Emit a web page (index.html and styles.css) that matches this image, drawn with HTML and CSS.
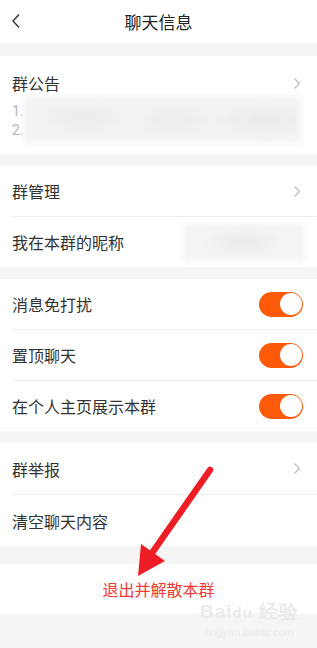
FILE: index.html
```html
<!DOCTYPE html>
<html lang="zh">
<head>
<meta charset="utf-8">
<title>聊天信息</title>
<link rel="stylesheet" href="styles.css">
</head>
<body>
<div class="page">
  <header class="topbar">
    <svg class="back" width="10" height="16" viewBox="0 0 10 16"><path d="M8 1.5 L2 8 L8 14.5" fill="none" stroke="#333" stroke-width="1.4"/></svg>
    <div class="title">聊天信息</div>
  </header>

  <section class="group notice-group">
    <div class="notice-head">
      <span class="label">群公告</span>
      <svg class="chev" width="8" height="13" viewBox="0 0 8 13"><path d="M1.5 1.5 L6.5 6.5 L1.5 11.5" fill="none" stroke="#bdbdbd" stroke-width="1.2"/></svg>
    </div>
    <div class="notice">
      <div class="nums"><div>1.</div><div>2.</div></div>
      <div class="blur"></div>
    </div>
  </section>

  <section class="group">
    <div class="row sep">
      <span class="label">群管理</span>
      <svg class="chev" width="8" height="13" viewBox="0 0 8 13"><path d="M1.5 1.5 L6.5 6.5 L1.5 11.5" fill="none" stroke="#bdbdbd" stroke-width="1.2"/></svg>
    </div>
    <div class="row">
      <span class="label">我在本群的昵称</span>
      <div class="blur nick"></div>
    </div>
  </section>

  <section class="group">
    <div class="row sep">
      <span class="label">消息免打扰</span>
      <span class="toggle"><span class="knob"></span></span>
    </div>
    <div class="row sep">
      <span class="label">置顶聊天</span>
      <span class="toggle"><span class="knob"></span></span>
    </div>
    <div class="row">
      <span class="label">在个人主页展示本群</span>
      <span class="toggle"><span class="knob"></span></span>
    </div>
  </section>

  <section class="group">
    <div class="row tall sep">
      <span class="label">群举报</span>
      <svg class="chev" width="8" height="13" viewBox="0 0 8 13"><path d="M1.5 1.5 L6.5 6.5 L1.5 11.5" fill="none" stroke="#bdbdbd" stroke-width="1.2"/></svg>
    </div>
    <div class="row tall">
      <span class="label">清空聊天内容</span>
    </div>
  </section>

  <section class="group exit">
    <span class="exit-text">退出并解散本群</span>
  </section>

  <div class="watermark">
    <div class="wm-top">Bai<span class="wm-du">du</span> 经验</div>
    <div class="wm-url">jingyan.baidu.com</div>
  </div>

  <svg class="arrow" width="317" height="648" viewBox="0 0 317 648">
    <line x1="210" y1="470" x2="152" y2="553" stroke="#ee1d25" stroke-width="6.5" stroke-linecap="round"/>
    <polygon points="138,576 141,544 165,561" fill="#ee1d25"/>
  </svg>
</div>
</body>
</html>
```
FILE: styles.css
```css
html, body {
  margin: 0;
  padding: 0;
}
body {
  background: #f5f5f5;
  font-family: "Noto Sans CJK SC", "Noto Sans", sans-serif;
  color: #333;
}
.page {
  position: relative;
  width: 317px;
  height: 648px;
  overflow: hidden;
}
.topbar {
  position: relative;
  height: 43px;
  background: #fff;
  display: flex;
  align-items: center;
  justify-content: center;
}
.back {
  position: absolute;
  left: 11px;
  top: 13px;
}
.title {
  font-size: 17px;
  color: #222;
  line-height: 24px;
}
.group {
  background: #fff;
  margin-top: 12px;
}
.notice-group {
  margin-top: 13px;
  padding: 15px 16px 11px 12px;
}
.notice-head {
  display: flex;
  align-items: center;
  justify-content: space-between;
  height: 24px;
}
.label {
  font-size: 16px;
  line-height: 24px;
  color: #333;
}
.notice {
  display: flex;
  align-items: flex-start;
  margin-top: 7px;
}
.nums {
  width: 11px;
  font-family: "Roboto", "Noto Sans", sans-serif;
  font-size: 14px;
  line-height: 19px;
  color: #b5b5b5;
}
.blur {
  margin-top: -6px;
  flex: 1;
  height: 47px;
  background:
    radial-gradient(ellipse 50px 16px at 60px 22px, #ebebeb, rgba(243,243,243,0)),
    radial-gradient(ellipse 50px 16px at 150px 24px, #ececec, rgba(243,243,243,0)),
    radial-gradient(ellipse 60px 16px at 240px 24px, #eaeaea, rgba(243,243,243,0)),
    #f3f3f3;
  filter: blur(3px);
}
.row {
  height: 50px;
  margin-left: 12px;
  padding-right: 16px;
  display: flex;
  align-items: center;
  justify-content: space-between;
}
.row.tall {
  height: 51px;
}
.sep {
  border-bottom: 1px solid #eeeeee;
}
.nick {
  flex: 0 0 122px;
  height: 38px;
  margin: 0 -4px 0 0;
  background:
    radial-gradient(ellipse 45px 14px at 60px 19px, #eaeaea, rgba(243,243,243,0)),
    #f4f4f4;
}
.toggle {
  position: relative;
  width: 44px;
  height: 25px;
  border-radius: 13px;
  background: #ff5a0a;
  margin-right: -2px;
}
.knob {
  position: absolute;
  right: 1px;
  top: 1.5px;
  width: 22px;
  height: 22px;
  border-radius: 50%;
  background: #fff;
}
.exit {
  margin-top: 18px;
  height: 50px;
  display: flex;
  align-items: center;
  justify-content: center;
}
.exit-text {
  font-size: 16px;
  color: #ee3b36;
  line-height: 24px;
}
.watermark {
  position: absolute;
  left: 200px;
  top: 602px;
  color: #ebebeb;
  font-family: "Liberation Sans", sans-serif;
  text-align: center;
}
.wm-top {
  font-size: 19px;
  font-weight: bold;
  line-height: 20px;
  letter-spacing: 1px;
}
.wm-du {
  font-size: 15px;
}
.wm-url {
  font-size: 11px;
  line-height: 14px;
  margin-top: 2px;
}
.arrow {
  position: absolute;
  left: 0;
  top: 0;
  pointer-events: none;
}
```
